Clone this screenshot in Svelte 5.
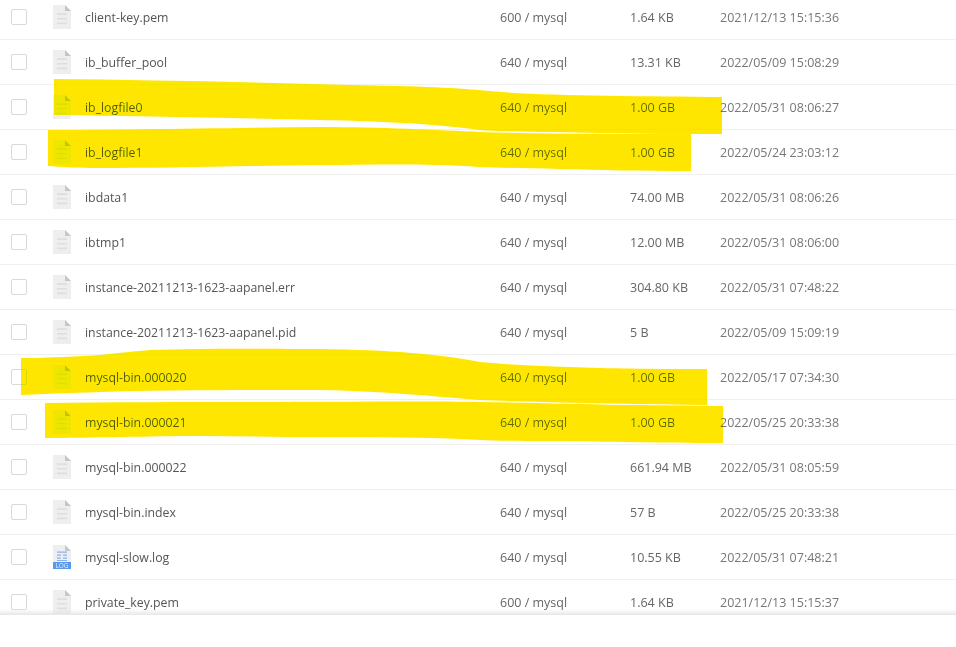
<script lang="ts">
  interface IFile {
    name: string;
    perm: string;
    size: string;
    date: string;
    log?: boolean;
  }
  const files: IFile[] = [
    { name: "client-key.pem", perm: "600 / mysql", size: "1.64 KB", date: "2021/12/13 15:15:36" },
    { name: "ib_buffer_pool", perm: "640 / mysql", size: "13.31 KB", date: "2022/05/09 15:08:29" },
    { name: "ib_logfile0", perm: "640 / mysql", size: "1.00 GB", date: "2022/05/31 08:06:27" },
    { name: "ib_logfile1", perm: "640 / mysql", size: "1.00 GB", date: "2022/05/24 23:03:12" },
    { name: "ibdata1", perm: "640 / mysql", size: "74.00 MB", date: "2022/05/31 08:06:26" },
    { name: "ibtmp1", perm: "640 / mysql", size: "12.00 MB", date: "2022/05/31 08:06:00" },
    { name: "instance-20211213-1623-aapanel.err", perm: "640 / mysql", size: "304.80 KB", date: "2022/05/31 07:48:22" },
    { name: "instance-20211213-1623-aapanel.pid", perm: "640 / mysql", size: "5 B", date: "2022/05/09 15:09:19" },
    { name: "mysql-bin.000020", perm: "640 / mysql", size: "1.00 GB", date: "2022/05/17 07:34:30" },
    { name: "mysql-bin.000021", perm: "640 / mysql", size: "1.00 GB", date: "2022/05/25 20:33:38" },
    { name: "mysql-bin.000022", perm: "640 / mysql", size: "661.94 MB", date: "2022/05/31 08:05:59" },
    { name: "mysql-bin.index", perm: "640 / mysql", size: "57 B", date: "2022/05/25 20:33:38" },
    { name: "mysql-slow.log", perm: "640 / mysql", size: "10.55 KB", date: "2022/05/31 07:48:21", log: true },
    { name: "private_key.pem", perm: "600 / mysql", size: "1.64 KB", date: "2021/12/13 15:15:37" }
  ];
  // hand-drawn marker strokes over the list
  const marks = [
    "M54 79 C150 80 250 82 350 85 C420 86 460 88 490 91 C540 96 640 96 722 97 L722 134 C680 134 640 134 600 133 C560 132 510 132 480 130 C420 122 360 121 320 120 C230 118 130 116 54 115 Z",
    "M48 130 C120 130 220 128 320 127 C380 127 440 130 480 132 C540 134 620 134 691 134 L691 171 C640 171 600 170 560 169 C530 168 500 168 480 167 C420 163 370 165 320 165 C240 166 160 168 100 168 C80 168 60 167 48 166 Z",
    "M21 358 C50 358 80 356 100 355 C120 353 135 351 150 350 C210 348 280 349 320 349 C390 350 440 354 480 362 C520 366 560 367 600 368 C640 369 680 369 707 369 L707 405 C640 404 560 403 480 400 C430 396 380 391 320 390 C240 390 160 390 100 392 C70 393 40 394 21 395 Z",
    "M45 403 C110 402 180 402 250 402 C330 402 420 401 480 402 C530 403 580 404 620 405 C660 405 700 406 723 406 L723 443 C680 443 620 442 560 441 C520 441 500 441 480 440 C430 437 370 437 320 437 C280 437 240 436 200 436 C150 436 90 438 45 438 Z"
  ];
</script>

<main>
  <div class="list">
    {#each files as file}
      <div class="row">
        <span class="check"></span>
        <svg class="icon" viewBox="0 0 18 24" width="18" height="24">
          <path d="M0 0H12L18 6V24H0Z" fill="#eeeeee" />
          <path d="M12 0L18 6H12Z" fill="#c6c6c6" />
          {#if file.log}
            <path d="M4 6.5H14V7.7H4ZM4 9.5H8V10.7H4ZM10 9.5H14V10.7H10ZM4 12.5H8V13.7H4ZM10 12.5H14V13.7H10ZM4 15H14V16H4Z" fill="#8ab2ee" />
            <rect x="0" y="17" width="18" height="7" fill="#5a98ea" />
            <text x="9" y="23" class="logtext" text-anchor="middle">LOG</text>
          {:else}
            <path d="M4 8.3H14V10H4ZM4 13H14V14.5H4ZM4 17.5H14V19.2H4Z" fill="#dedede" />
          {/if}
        </svg>
        <span class="name">{file.name}</span>
        <span>{file.perm}</span>
        <span>{file.size}</span>
        <span class="date">{file.date}</span>
      </div>
    {/each}
    <div class="fade"></div>
  </div>
  <svg class="marker" viewBox="0 0 956 647" width="956" height="647">
    {#each marks as d}
      <path {d} fill="#ffe600" />
    {/each}
  </svg>
</main>

<style>
  :global(body) {
    background: #fff;
  }
  main {
    position: relative;
    width: 956px;
    height: 647px;
    overflow: hidden;
    font-family: "Open Sans", "Noto Sans CJK SC", sans-serif;
  }
  .list {
    position: relative;
    height: 615px;
    overflow: hidden;
  }
  .row {
    display: grid;
    grid-template-columns: 53px 32px 415px 130px 90px 1fr;
    align-items: center;
    height: 44px;
    border-bottom: 1px solid #f0f0f0;
    font-size: 12.5px;
    color: #666;
  }
  .row:first-child {
    margin-top: -5px;
  }
  .check {
    width: 14px;
    height: 14px;
    margin-left: 11px;
    border: 1px solid #d9d9d9;
    border-radius: 2px;
  }
  .icon {
    display: block;
  }
  .name {
    font-size: 12.3px;
    color: #555;
  }
  .date {
    color: #777;
  }
  .logtext {
    font-size: 6.5px;
    fill: #e8f0fc;
  }
  .fade {
    position: absolute;
    left: 0;
    right: 0;
    bottom: 0;
    height: 6px;
    background: linear-gradient(rgba(225, 225, 225, 0), rgba(225, 225, 225, 0.8));
  }
  .marker {
    position: absolute;
    left: 0;
    top: 0;
    mix-blend-mode: darken;
    pointer-events: none;
  }
</style>
